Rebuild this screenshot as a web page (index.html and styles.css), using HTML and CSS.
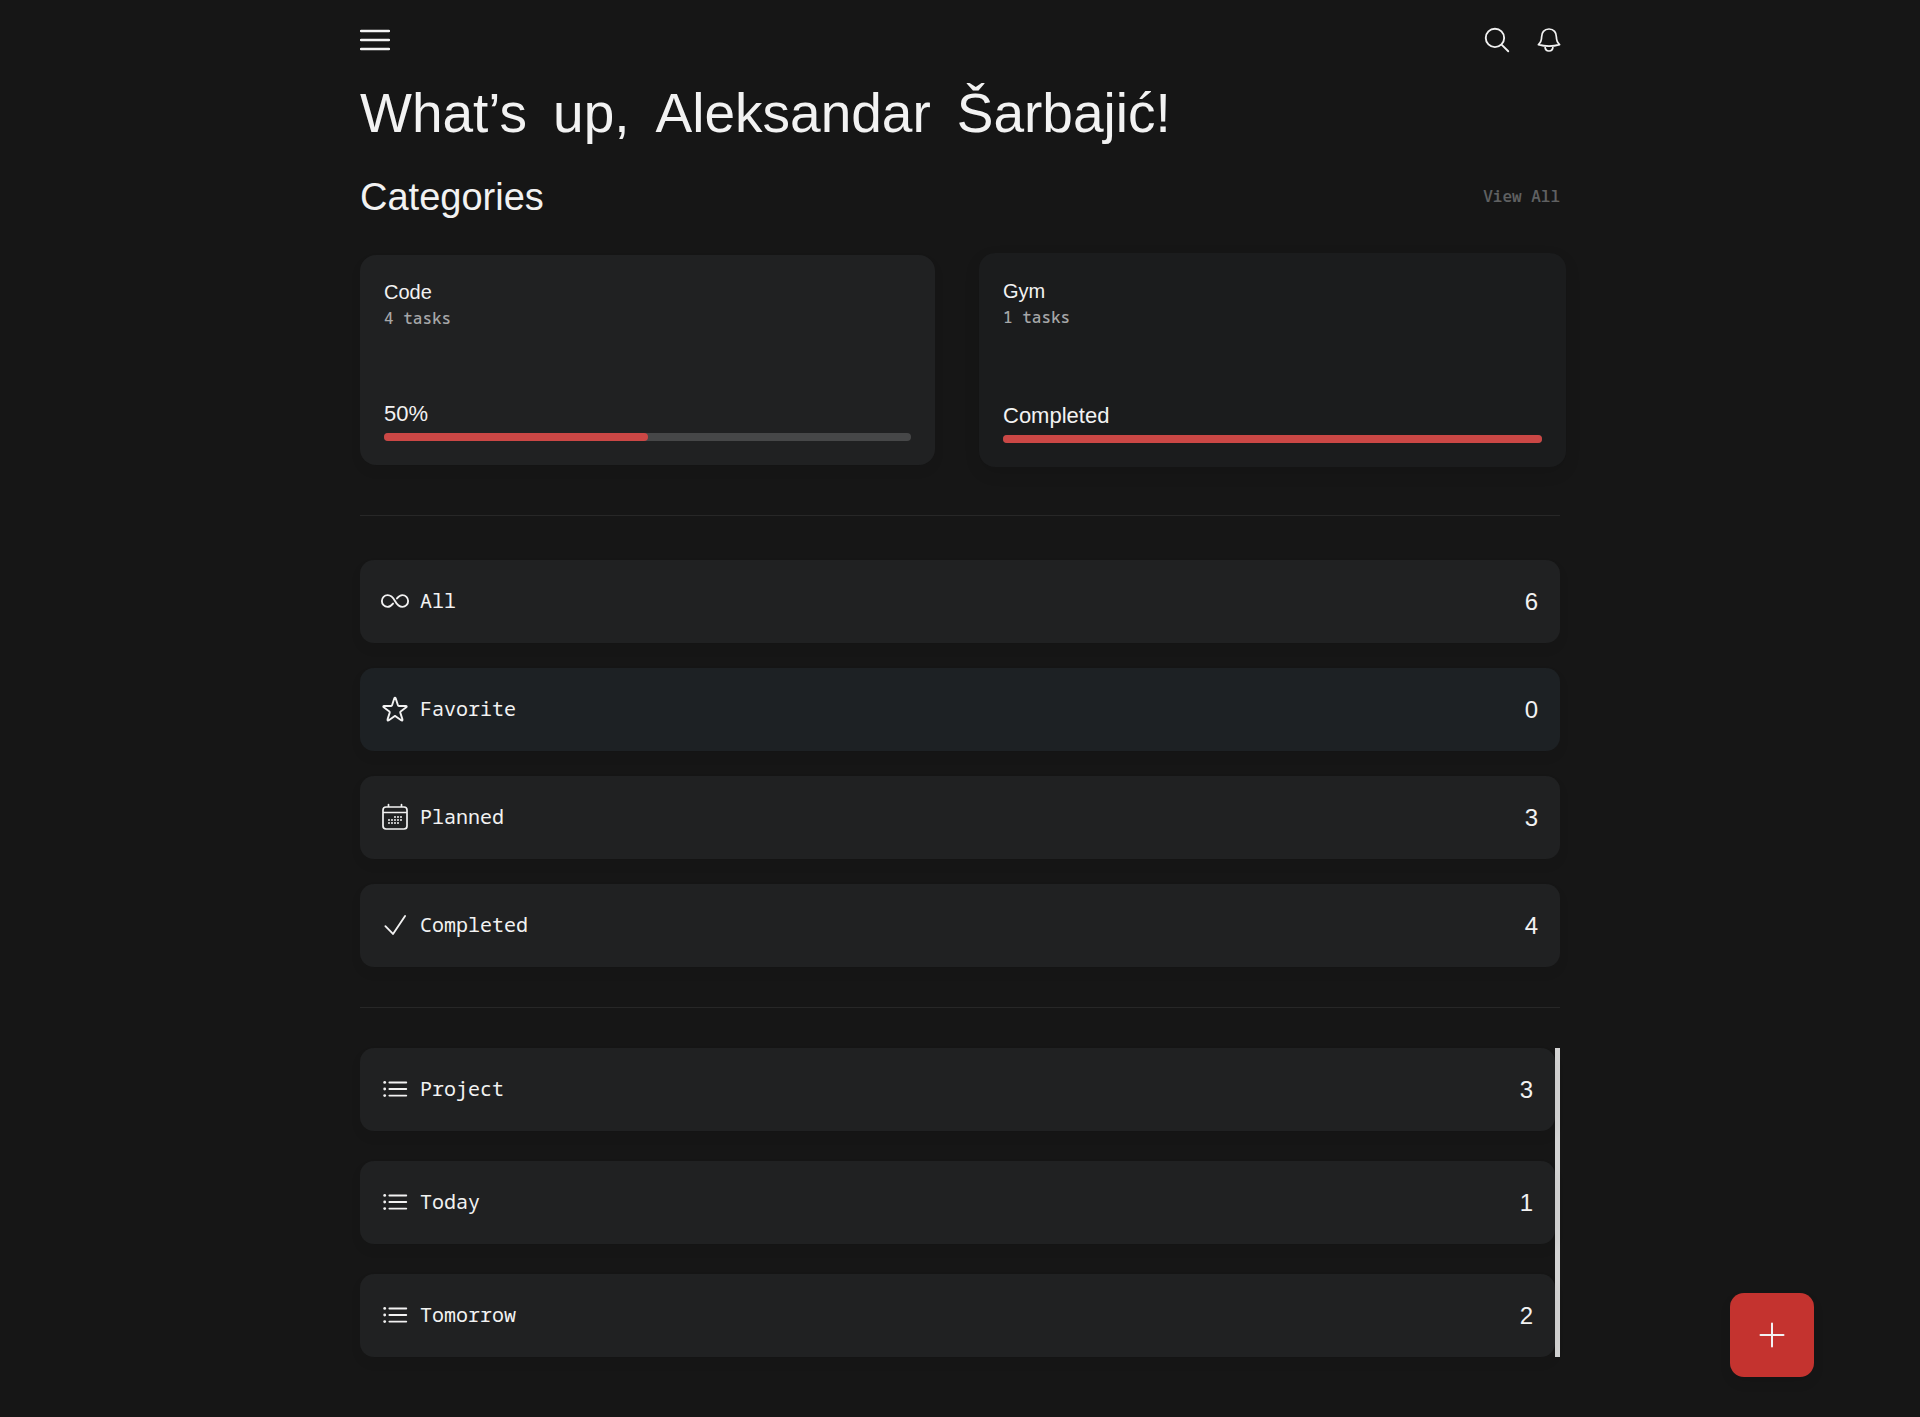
FILE: index.html
```html
<!DOCTYPE html>
<html lang="en">
<head>
<meta charset="utf-8">
<meta name="viewport" content="width=device-width, initial-scale=1">
<title>Tasks</title>
<link rel="stylesheet" href="styles.css">
</head>
<body>
<svg class="sprite" aria-hidden="true">
  <symbol id="list" viewBox="0 0 512 512"><path d="M160 144h288M160 256h288M160 368h288"/><g class="dots"><circle cx="80" cy="144" r="24"/><circle cx="80" cy="256" r="24"/><circle cx="80" cy="368" r="24"/></g></symbol>
</svg>
<div class="page">
  <header class="topbar">
    <button class="icon-button" aria-label="Menu"><svg class="icon" viewBox="0 0 30 30"><path class="heavy" d="M1 6h28M1 15h28M1 24h28"/></svg></button>
    <div class="actions">
      <button class="icon-button" aria-label="Search"><svg class="icon" viewBox="0 0 512 512"><path d="M221 64a157 157 0 1 0 157 157A157 157 0 0 0 221 64zM338 338l110 110"/></svg></button>
      <button class="icon-button" aria-label="Notifications"><svg class="icon" viewBox="0 0 30 30"><path class="thin" d="M15 4c-5 0-7.400 3.700-7.400 8 0 4-.8 5.500-3.200 7.600 6.500 1.800 14.700 1.800 21.200 0C23.200 17.500 22.400 16 22.400 12c0-4.300-2.400-8-7.400-8zM11 21c0 2.800 1.500 5 4 5s4-2.200 4-5"/></svg></button>
    </div>
  </header>

  <h1 class="greeting"><span>What’s</span> <span>up,</span> <span>Aleksandar</span> <span>Šarbajić!</span></h1>

  <main>
    <section>
      <div class="section-head">
        <h2>Categories</h2>
        <a class="view-all" href="#">View All</a>
      </div>
      <div class="cards">
        <article class="card">
          <h3>Code</h3>
          <p class="count">4 tasks</p>
          <div class="progress-label">50%</div>
          <div class="track"><div class="fill" style="width: 50%"></div></div>
        </article>
        <article class="card raised">
          <h3>Gym</h3>
          <p class="count">1 tasks</p>
          <div class="progress-label">Completed</div>
          <div class="track"><div class="fill" style="width: 100%"></div></div>
        </article>
      </div>
    </section>

    <nav class="rows filters">
      <a class="row" href="#"><svg class="icon" viewBox="0 0 512 512"><path d="M256 256s-55-100-126-100c-54 0-98 43-98 100s44 100 98 100c38 0 68-26 92-56M256 256s55 100 126 100c54 0 98-43 98-100s-44-100-98-100c-38 0-68 26-92 56"/></svg><span>All</span><span class="number">6</span></a>
      <a class="row tinted" href="#"><svg class="icon" viewBox="0 0 512 512"><path d="M256 62q8 0 12 12l38 118q4 12 16 12h118q14 0 16 8t-8 16l-96 70q-10 8-6 20l37 115q4 12-3 18t-18-2l-97-71q-9-6-18 0l-97 71q-11 8-18 2t-3-18l37-115q4-12-6-20l-96-70q-10-8-8-16t16-8h118q12 0 16-12l38-118q4-12 12-12z"/></svg><span>Favorite</span><span class="number">0</span></a>
      <a class="row" href="#"><svg class="icon" viewBox="0 0 30 30"><path class="thin" d="M6 5h18q3 0 3 3v16q0 3-3 3H6q-3 0-3-3V8q0-3 3-3zM3 10.500h24M8.500 2.500V5M21.500 2.500V5"/><path class="thick" d="M15 15h0M18 15h0M21 15h0M9 18h0M12 18h0M15 18h0M18 18h0M21 18h0M9 21h0M12 21h0M15 21h0M18 21h0"/></svg><span>Planned</span><span class="number">3</span></a>
      <a class="row" href="#"><svg class="icon" viewBox="0 0 512 512"><path d="M428 104L222 408l-130-132"/></svg><span>Completed</span><span class="number">4</span></a>
    </nav>

    <nav class="rows lists">
      <a class="row" href="#"><svg class="icon"><use href="#list"/></svg><span>Project</span><span class="number">3</span></a>
      <a class="row" href="#"><svg class="icon"><use href="#list"/></svg><span>Today</span><span class="number">1</span></a>
      <a class="row" href="#"><svg class="icon"><use href="#list"/></svg><span>Tomorrow</span><span class="number">2</span></a>
    </nav>
  </main>
</div>
<button class="add" aria-label="Add task"><svg class="icon" viewBox="0 0 30 30"><path class="thick" d="M15 3.500v23M3.500 15h23"/></svg></button>
</body>
</html>
```
FILE: styles.css
```css
* {
  box-sizing: border-box;
}

body {
  margin: 0;
  background: #161616;
  color: #f2f2f2;
  font-family: "Noto Sans Mono", "DejaVu Sans Mono", monospace;
  font-size: 20px;
}

h1, h2, h3, p {
  margin: 0;
  font-weight: 400;
}

h1, h2, h3, .progress-label, .number {
  font-family: "Liberation Sans", sans-serif;
}

a {
  color: inherit;
  text-decoration: none;
}

.sprite {
  display: none;
}

.page {
  max-width: 1240px;
  margin: 0 auto;
  padding: 25px 20px 60px;
}

.icon {
  display: block;
  flex: none;
  width: 30px;
  height: 30px;
  fill: none;
  stroke: currentColor;
  stroke-width: 32;
  stroke-linecap: round;
  stroke-linejoin: round;
}

.thin {
  stroke-width: 1.7;
}

.thick {
  stroke-width: 2;
}

.heavy {
  stroke-width: 2.4;
}

.dots {
  fill: currentColor;
  stroke: none;
}

.icon-button {
  padding: 0;
  border: 0;
  background: none;
  color: inherit;
}

.topbar, .actions, .section-head {
  display: flex;
  align-items: center;
  justify-content: space-between;
}

.actions {
  gap: 22px;
  margin-right: -4px;
}

.greeting {
  display: flex;
  flex-wrap: wrap;
  column-gap: 26px;
  margin-top: 28px;
  font-size: 55px;
  line-height: 60px;
}

.section-head {
  margin-top: 34px;
}

h2 {
  font-size: 38px;
  line-height: 40px;
}

.view-all {
  padding-bottom: 2px;
  color: #5f6061;
  font-size: 16px;
  font-weight: 600;
}

.cards {
  display: grid;
  grid-template-columns: 1fr 1fr;
  gap: 50px;
  margin-top: 38px;
}

.card {
  display: flex;
  flex-direction: column;
  min-height: 210px;
  padding: 25px 24px 24px;
  border-radius: 16px;
  background: #202122;
  box-shadow: 0 6px 12px rgba(0, 0, 0, 0.06);
}

.raised {
  margin: -2px -6px;
  padding-top: 26px;
  background: #1b1c1d;
  box-shadow: 0 6px 16px rgba(0, 0, 0, 0.1);
}

h3 {
  font-size: 20px;
  line-height: 24px;
}

.count {
  margin-top: 4px;
  color: #a6a7a8;
  font-size: 16px;
  font-weight: 500;
  line-height: 20px;
}

.progress-label {
  margin-top: auto;
  font-size: 22px;
  line-height: 24px;
}

.track {
  height: 8px;
  margin-top: 7px;
  border-radius: 4px;
  background: #464748;
}

.fill {
  height: 100%;
  border-radius: 4px;
  background: #cb4745;
}

.rows {
  display: grid;
}

.filters {
  gap: 25px;
  margin: 50px 0 40px;
  padding: 44px 0 40px;
  border: solid #272727;
  border-width: 1px 0;
}

.lists {
  gap: 30px;
  border-right: 5px solid #d3d3d3;
}

.row {
  display: flex;
  align-items: center;
  gap: 10px;
  height: 83px;
  padding: 0 22px 2px 20px;
  border-radius: 14px;
  background: #202122;
  box-shadow: 0 6px 12px rgba(0, 0, 0, 0.06);
}

.tinted {
  background: #1d2124;
}

.number {
  margin-left: auto;
  padding-top: 3px;
  font-size: 24px;
}

.add {
  position: fixed;
  right: 106px;
  bottom: 40px;
  display: grid;
  place-items: center;
  width: 84px;
  height: 84px;
  border: 0;
  border-radius: 14px;
  background: #c4332f;
  color: #f2f2f2;
  box-shadow: 0 6px 12px rgba(0, 0, 0, 0.08);
}
```
